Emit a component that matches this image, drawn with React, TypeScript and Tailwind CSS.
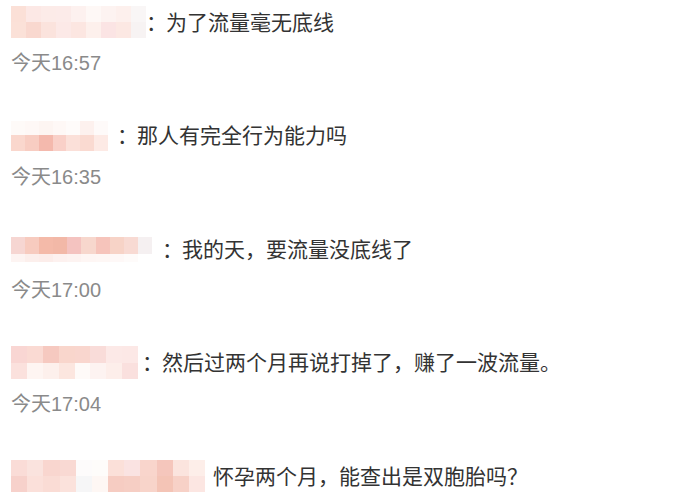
const CJK = '"Liberation Sans", "Noto Sans CJK SC", sans-serif';

type Comment = {
  name: { width: number; slot: number; rows: string[][]; rowHeights: number[] };
  text: string;
  time?: string;
  colon?: boolean;
};

const comments: Comment[] = [
  {
    name: {
      width: 136,
      slot: 135,
      rowHeights: [16, 16],
      rows: [
        ["#fbe0d7", "#fce8e5", "#fcebe8", "#fcebe9", "#fdf1ef", "#fef8f6", "#fdf3f1", "#fdf0ed", "#f9f6f6"],
        ["#fbe1d8", "#f9d8cf", "#fbe3dd", "#fce9e7", "#fce6e1", "#fdf0ec", "#fbe4e4", "#fce8e3", "#f7f3f3"],
      ],
    },
    text: "为了流量毫无底线",
    time: "今天16:57",
    colon: true,
  },
  {
    name: {
      width: 97,
      slot: 106,
      rowHeights: [14, 16],
      rows: [
        ["#fefaf8", "#fef8f6", "#fdf5f2", "#fef8f6", "#fefbfa", "#fdf1ee", "#fefaf9"],
        ["#fad7cd", "#f8cdc2", "#f4b9ad", "#f9d0c8", "#fbe0d9", "#fadad1", "#fdeae5"],
      ],
    },
    text: "那人有完全行为能力吗",
    time: "今天16:35",
    colon: true,
  },
  {
    name: {
      width: 141,
      slot: 151,
      rowHeights: [17, 8],
      rows: [
        ["#f6d6d2", "#f7cbbf", "#f4baa9", "#f2b8a7", "#f4c3c0", "#f7d7cd", "#f6c4bb", "#f7d3c7", "#f8dad3", "#f5f0f1"],
        ["#fdf4f2", "#fcefec", "#fcedea", "#fdf1ef", "#fdf3f1", "#fef6f4", "#fef7f5", "#fef8f7", "#fefbfa", "#ffffff"],
      ],
    },
    text: "我的天，要流量没底线了",
    time: "今天17:00",
    colon: true,
  },
  {
    name: {
      width: 127,
      slot: 131,
      rowHeights: [17, 16],
      rows: [
        ["#f9d6d3", "#fadad3", "#f6c9c0", "#f9d6cc", "#f9d6ce", "#f9dcd9", "#fce9e7", "#fce8e6"],
        ["#fbe1dd", "#fef5f2", "#fdf0ec", "#fce6df", "#fefaf8", "#fdf3f1", "#fdeeea", "#fae0de"],
      ],
    },
    text: "然后过两个月再说打掉了，赚了一波流量。",
    time: "今天17:04",
    colon: true,
  },
  {
    name: {
      width: 194,
      slot: 194,
      rowHeights: [16, 16],
      rows: [
        ["#fadcd7", "#fae3de", "#f9d6cf", "#f9d9d3", "#fdfbfb", "#fefcfa", "#fbe0d9", "#fae3e2", "#f9d5cc", "#f5c6bc", "#fbe4de", "#fdeee9"],
        ["#f7d1cb", "#fbe0da", "#fadcd5", "#fbe2dc", "#f6f6f7", "#fef7f4", "#f6ccc2", "#f6cec4", "#f8d4ca", "#f4c4b6", "#f7d1c7", "#fce6e2"],
      ],
    },
    text: "怀孕两个月，能查出是双胞胎吗？",
  },
];

function Mosaic({ width, rows, rowHeights }: Comment["name"]) {
  return (
    <div className="flex flex-col" style={{ width }} aria-hidden>
      {rows.map((row, i) => (
        <div key={i} className="flex" style={{ height: rowHeights[i] }}>
          {row.map((color, j) => (
            <div key={j} className="flex-1" style={{ backgroundColor: color }} />
          ))}
        </div>
      ))}
    </div>
  );
}

function CommentRow({ comment }: { comment: Comment }) {
  return (
    <li className="flex flex-col">
      <div className="flex h-[32px] items-center">
        <div className="flex shrink-0" style={{ width: comment.name.slot }}>
          <Mosaic {...comment.name} />
        </div>
        {comment.colon ? (
          <span className="w-[20px] shrink-0 text-[21px] leading-none text-[#333]">：</span>
        ) : (
          <span className="w-[8px] shrink-0" />
        )}
        <span className="whitespace-nowrap text-[21px] leading-none text-[#333]">
          {comment.text}
        </span>
      </div>
      {comment.time ? (
        <p className="mt-[13px] h-[24px] text-[20px] leading-[24px] text-[#8a8a8a]">
          {comment.time}
        </p>
      ) : null}
    </li>
  );
}

export default function App() {
  return (
    <div className="h-[501px] w-[698px] overflow-hidden bg-white" style={{ fontFamily: CJK }}>
      <ul className="flex flex-col gap-[44.5px] pl-[11px] pt-[6px]">
        {comments.map((c) => (
          <CommentRow key={c.text} comment={c} />
        ))}
      </ul>
    </div>
  );
}
